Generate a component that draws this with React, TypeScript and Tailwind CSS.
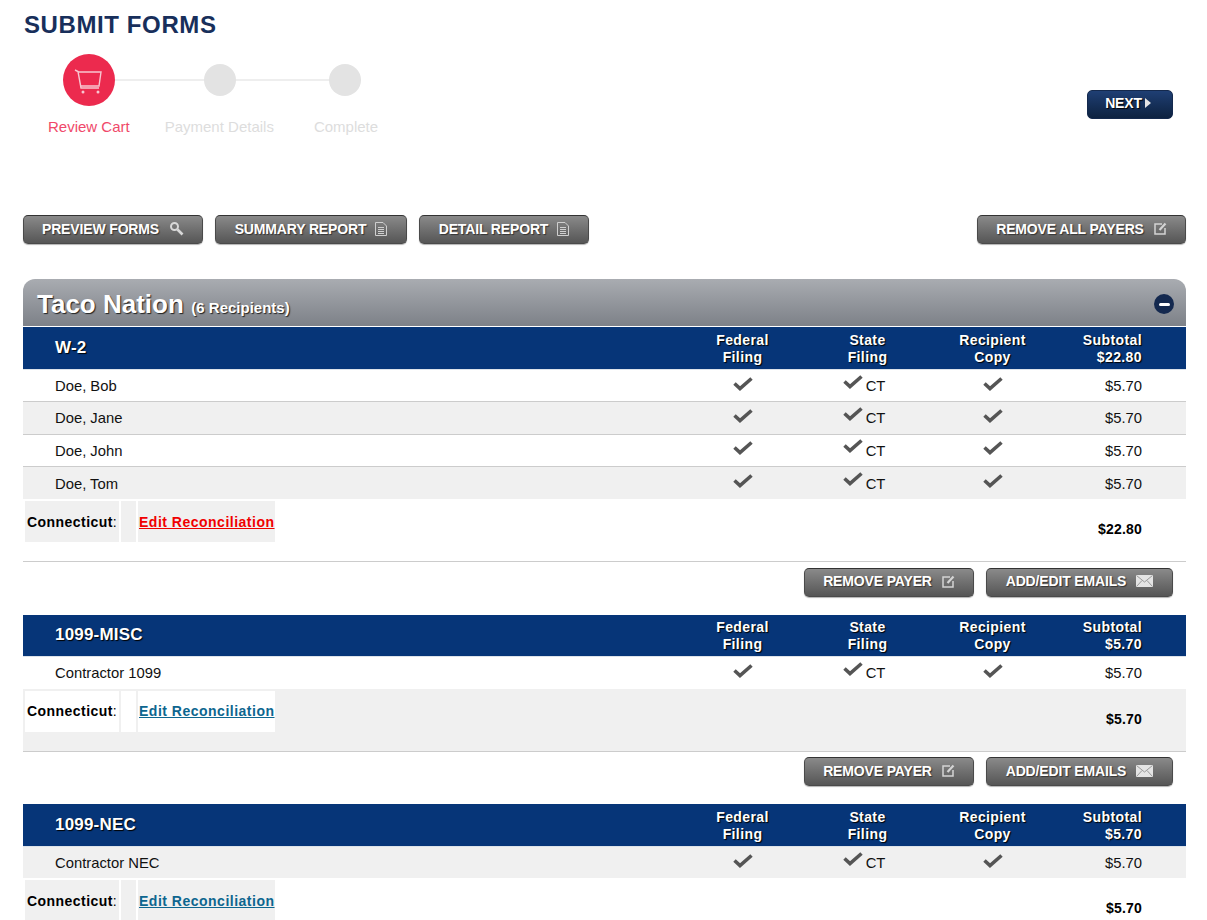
const shadow = "[text-shadow:1px_1px_1px_#000]";

function CartIcon() {
  return (
    <svg width="30" height="28" viewBox="0 0 30 28" fill="none" stroke="#f7c6d0" strokeWidth="1.4">
      <path d="M1 4 L4 5.5 L7 22 H25" />
      <path d="M4 6 H27 L25 20 H6.5" />
      <circle cx="9" cy="26" r="1.5" fill="#f7c6d0" stroke="none" />
      <circle cx="24" cy="26" r="1.5" fill="#f7c6d0" stroke="none" />
    </svg>
  );
}

function SearchIcon() {
  return (
    <svg width="15" height="15" viewBox="0 0 15 15" fill="none" stroke="#d8d8d8">
      <circle cx="5.5" cy="5.5" r="3.5" strokeWidth="2" />
      <path d="M8.5 8.5 L13.5 13.5" strokeWidth="2.6" />
    </svg>
  );
}

function DocIcon() {
  return (
    <svg width="12" height="14" viewBox="0 0 12 14" fill="none" stroke="#cfcfcf">
      <path d="M0.5 0.5 H8 L11.5 4 V13.5 H0.5 Z" />
      <path d="M3 5.5 H9 M3 7.5 H9 M3 9.5 H9 M3 11.5 H9" />
    </svg>
  );
}

function EditIcon() {
  return (
    <svg width="13" height="13" viewBox="0 0 13 13" fill="none" stroke="#d4d4d4">
      <path d="M8 2 H1 V12 H11 V6" strokeWidth="1.5" />
      <path d="M5.5 8 L11.5 1.5" strokeWidth="2.2" />
    </svg>
  );
}

function MailIcon() {
  return (
    <svg width="17" height="12" viewBox="0 0 17 12">
      <rect width="17" height="12" fill="#e4e4e4" />
      <path d="M0.5 0.5 L8.5 7 L16.5 0.5 M0.5 11.5 L6 5.5 M16.5 11.5 L11 5.5" fill="none" stroke="#999" />
    </svg>
  );
}

function Check() {
  return (
    <svg width="20" height="14" viewBox="0 0 20 14" fill="none" stroke="#555" strokeWidth="3.6" className="block">
      <polyline points="1.5,6.5 7,11.5 18.5,1.5" />
    </svg>
  );
}

function GrayButton({ label, icon, className }: { label: string; icon: React.ReactNode; className: string }) {
  return (
    <button
      type="button"
      className={`flex h-[29px] items-center justify-center rounded-[5px] border border-[#4a4a4a] border-t-[#333] bg-gradient-to-b from-[#8a8a8a] to-[#565656] pb-[2px] text-sm font-bold tracking-[-0.15px] text-white shadow-[0_1px_1px_rgba(0,0,0,0.3)] [text-shadow:1px_1px_1px_#333] ${className}`}
    >
      {label}
      {icon}
    </button>
  );
}

function Step({ label, active }: { label: string; active?: boolean }) {
  if (active) {
    return (
      <div className="flex h-[52px] w-[52px] items-center justify-center rounded-full bg-[#ec2a4e]" aria-label={label}>
        <CartIcon />
      </div>
    );
  }
  return <div className="h-8 w-8 rounded-full bg-[#e3e3e3]" aria-label={label} />;
}

interface Group {
  form: string;
  subtotal: string;
  recipients: string[];
  firstGray?: boolean;
  blockGray?: boolean;
  red?: boolean;
  headH: string;
  rowH: string;
  stateH: string;
  last?: boolean;
}

const groups: Group[] = [
  {
    form: "W-2",
    subtotal: "$22.80",
    recipients: ["Doe, Bob", "Doe, Jane", "Doe, John", "Doe, Tom"],
    red: true,
    headH: "h-[43px]",
    rowH: "h-[32.33px]",
    stateH: "h-[62.7px]",
  },
  {
    form: "1099-MISC",
    subtotal: "$5.70",
    recipients: ["Contractor 1099"],
    blockGray: true,
    headH: "h-[42.5px]",
    rowH: "h-[31.5px]",
    stateH: "h-[63.3px]",
  },
  {
    form: "1099-NEC",
    subtotal: "$5.70",
    recipients: ["Contractor NEC"],
    firstGray: true,
    headH: "h-[43px]",
    rowH: "h-[31px]",
    stateH: "h-[63px]",
    last: true,
  },
];

function FormGroup({ group }: { group: Group }) {
  const cell = group.blockGray ? "bg-white" : "bg-[#f0f0f0]";
  return (
    <div>
      <div className={`grid grid-cols-[657px_125px_125px_125px_1fr] items-center border-b border-b-[#dde3ea] bg-[#063578] text-center text-sm leading-[17px] font-bold tracking-[0.4px] text-white ${shadow} ${group.headH}`}>
        <div className="pb-[2px] pl-8 text-left text-[17px] tracking-[0.2px]">{group.form}</div>
        <div className="pt-[2px]">Federal<br />Filing</div>
        <div className="pt-[2px]">State<br />Filing</div>
        <div className="pt-[2px]">Recipient<br />Copy</div>
        <div className="pt-[2px] pr-11 text-right">Subtotal<br />{group.subtotal}</div>
      </div>
      {group.recipients.map((name, i) => {
        const gray = group.firstGray ? i % 2 === 0 : i % 2 === 1;
        const border = i < group.recipients.length - 1 ? "border-b border-b-[#ccc]" : "";
        return (
          <div
            key={name}
            className={`grid grid-cols-[657px_125px_125px_125px_1fr] items-center pt-[1px] text-[14.8px] text-[#111] ${group.rowH} ${border} ${gray ? "bg-[#f0f0f0]" : "bg-white"}`}
          >
            <div className="pl-8">{name}</div>
            <div className="flex justify-center pb-[5px]"><Check /></div>
            <div className="ml-[-7px] flex items-center justify-center gap-[3px]">
              <span className="mb-[9px]"><Check /></span>
              <span>CT</span>
            </div>
            <div className="flex justify-center pb-[5px]"><Check /></div>
            <div className="pr-11 text-right">$5.70</div>
          </div>
        );
      })}
      <div className={`flex items-start justify-between border-b border-b-[#ccc] pt-[2px] ${group.stateH} ${group.blockGray ? "bg-[#f0f0f0]" : "bg-white"}`}>
        <div className="ml-[2px] flex h-[41px] gap-[2px] text-sm">
          <div className={`flex w-[94px] items-center pl-[2px] tracking-[0.45px] text-black ${cell}`}>
            <span><b>Connecticut</b>:</span>
          </div>
          <div className={`w-[15px] ${cell}`} />
          <div className={`flex w-[137px] items-center pl-[1px] ${cell}`}>
            <a href="#" className={`font-bold tracking-[0.5px] underline ${group.red ? "text-[#f00000]" : "text-[#0d668f]"}`}>
              Edit Reconciliation
            </a>
          </div>
        </div>
        <div className="pt-[20px] pr-11 text-sm leading-[17px] font-bold tracking-[0.2px] text-black">{group.subtotal}</div>
      </div>
      {!group.last && (
        <div className="flex justify-end gap-3 pt-[5.5px] pr-[13px] pb-[18px]">
          <GrayButton label="REMOVE PAYER" icon={<span className="ml-[10px]"><EditIcon /></span>} className="w-[170px]" />
          <GrayButton label="ADD/EDIT EMAILS" icon={<span className="ml-[10px]"><MailIcon /></span>} className="w-[187px]" />
        </div>
      )}
    </div>
  );
}

export default function App() {
  return (
    <div className="h-[920px] overflow-hidden bg-white pt-[11px] pr-[21px] pl-[23px] font-['Liberation_Sans',Arial,sans-serif]">
      <h1 className="ml-px text-2xl leading-7 font-bold tracking-[0.6px] text-[#182f5b]">SUBMIT FORMS</h1>

      <div className="mt-[15px] flex items-start justify-between">
        <div>
          <div className="ml-[40px] flex items-center">
            <Step label="Review Cart" active />
            <div className="h-[2px] w-[89px] bg-[#eeeeee]" />
            <Step label="Payment Details" />
            <div className="h-[2px] w-[93px] bg-[#eeeeee]" />
            <Step label="Complete" />
          </div>
          <div className="mt-[12px] ml-[25px] flex text-[15px] leading-[18px] text-[#dddddd]">
            <span className="mr-[35px] text-[#f0496a]">Review Cart</span>
            <span className="mr-[40px]">Payment Details</span>
            <span>Complete</span>
          </div>
        </div>
        <button
          type="button"
          className={`mt-[36px] mr-[13px] flex h-[29px] w-[86px] items-center justify-center gap-[3px] rounded-[5px] border border-[#14294d] bg-gradient-to-b from-[#1f3f74] to-[#0d2240] pr-[4px] pb-[3px] text-sm font-bold tracking-[-0.15px] text-white ${shadow}`}
        >
          NEXT
          <svg width="6" height="10" viewBox="0 0 6 10" fill="#e5e5e5"><path d="M0 0 L6 5 L0 10 Z" /></svg>
        </button>
      </div>

      <div className="mt-[79px] flex">
        <div className="flex gap-3">
          <GrayButton label="PREVIEW FORMS" icon={<span className="ml-[10px]"><SearchIcon /></span>} className="w-[180px]" />
          <GrayButton label="SUMMARY REPORT" icon={<span className="ml-[9px]"><DocIcon /></span>} className="w-[192px]" />
          <GrayButton label="DETAIL REPORT" icon={<span className="ml-[9px]"><DocIcon /></span>} className="w-[170px]" />
        </div>
        <GrayButton label="REMOVE ALL PAYERS" icon={<span className="ml-[10px]"><EditIcon /></span>} className="ml-auto w-[209px]" />
      </div>

      <div className="mt-[35px] flex h-[48px] items-center justify-between rounded-t-[12px] border-b border-b-white bg-gradient-to-b from-[#a9acb1] to-[#7d8188] pt-[3px] pr-[12px] pl-[14px] text-white [text-shadow:1px_1px_1px_#222]">
        <div className="font-bold">
          <span className="text-[26px]">Taco Nation</span>{" "}
          <span className="ml-[3px] text-[15px]">(6 Recipients)</span>
        </div>
        <div className="flex h-5 w-5 items-center justify-center rounded-full bg-[#14294f]">
          <div className="h-[3px] w-[11px] rounded-sm bg-white" />
        </div>
      </div>

      {groups.map((group) => (
        <FormGroup key={group.form} group={group} />
      ))}
    </div>
  );
}
